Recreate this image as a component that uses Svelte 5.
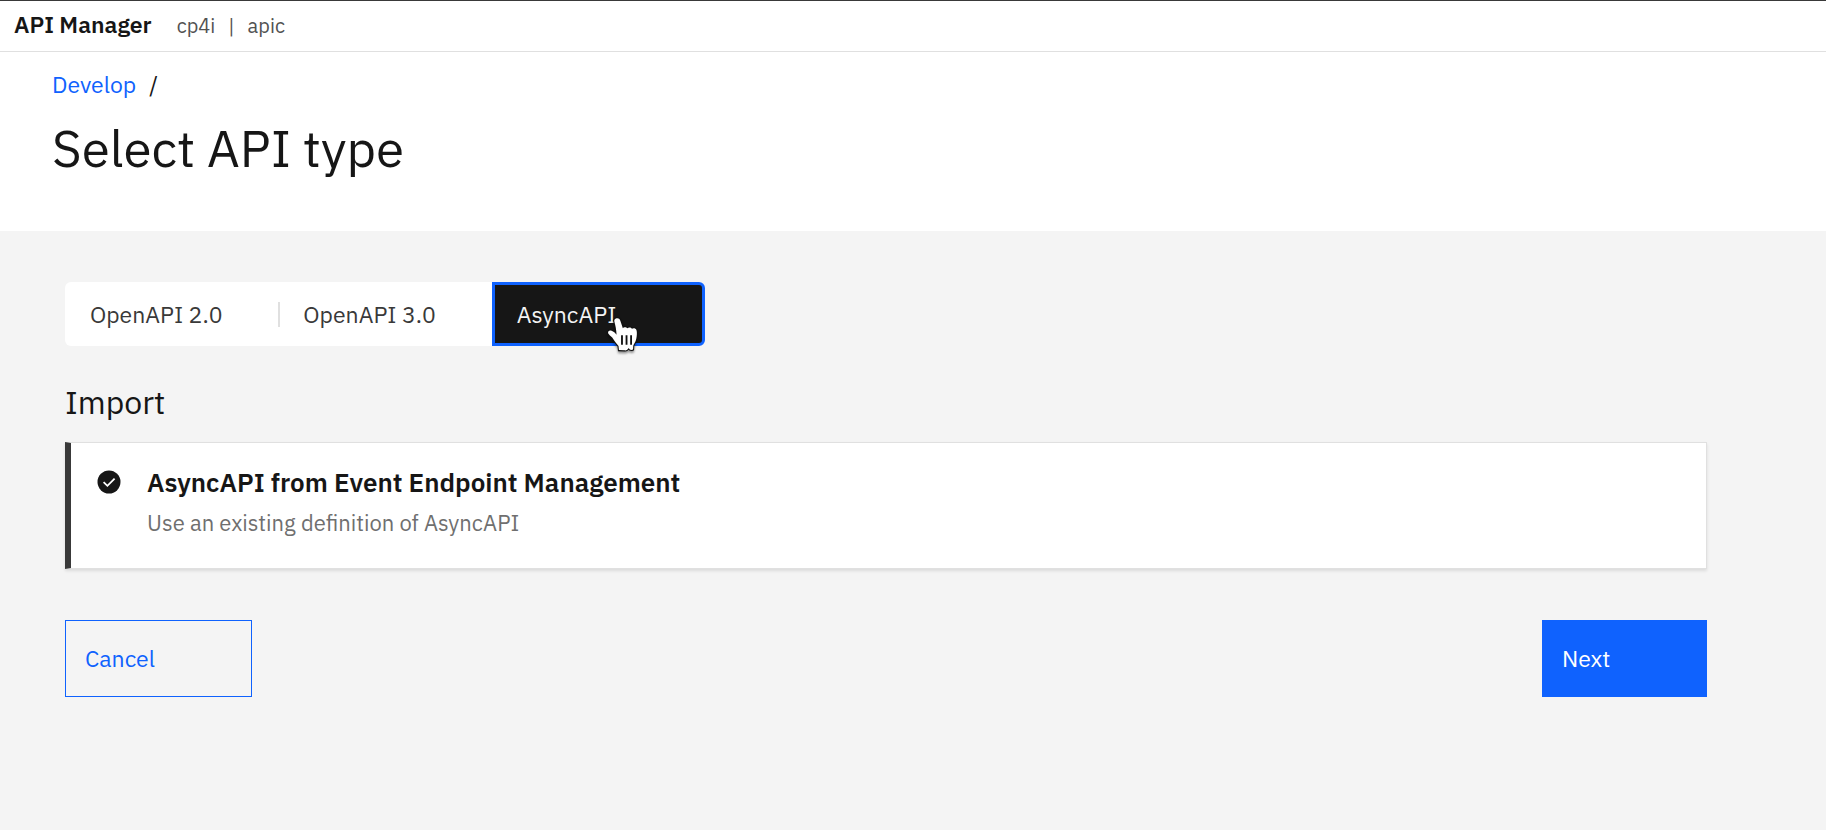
<script>
  const types = ['OpenAPI 2.0', 'OpenAPI 3.0', 'AsyncAPI'];
  let selected = $state('AsyncAPI');
</script>

<div class="page">
  <header class="topbar">
    <span class="product">API Manager</span>
    <span class="context">cp4i</span>
    <span class="context bar">|</span>
    <span class="context">apic</span>
  </header>

  <section class="heading">
    <nav class="crumbs" aria-label="Breadcrumb">
      <a href="#develop">Develop</a>
      <span>/</span>
    </nav>
    <h1>Select API type</h1>
  </section>

  <main>
    <div class="switcher">
      {#each types as type}
        <button
          type="button"
          class="tab"
          class:active={selected === type}
          aria-pressed={selected === type}
          onclick={() => (selected = type)}>{type}</button>
      {/each}
      <svg class="pointer" viewBox="0 0 32 36" aria-hidden="true">
        <path
          d="M9 3.2C10.8 2.4 12.4 3.3 13 5L15.4 12.2C16.2 10.9 18.6 10.8 19.6 12.3C20.8 11.1 23 11.4 23.8 12.8C25.2 11.8 27.4 12.4 28 14C28.6 16 28.4 19 27.8 22C27.2 25 25.6 26.6 25 28.4L24.8 31.8C22.8 32.8 21.6 31.8 20.8 30.4C19.8 32 18.6 33 16.8 32.6L11.8 32.4L11.4 28.6C9.4 26.4 7.4 23.4 5.6 20.8C4.4 19.4 2.4 18.2 1.8 16.8C1.4 14.8 3.2 13.8 5 14.6C6.8 15.2 8.4 16.8 9.6 18.2C9.4 13.6 8.6 9.6 7.6 6.2C7.2 4.8 7.8 3.6 9 3.2Z"
          fill="none" stroke="#111" stroke-width="2" />
        <path
          d="M9 3.2C10.8 2.4 12.4 3.3 13 5L15.4 12.2C16.2 10.9 18.6 10.8 19.6 12.3C20.8 11.1 23 11.4 23.8 12.8C25.2 11.8 27.4 12.4 28 14C28.6 16 28.4 19 27.8 22C27.2 25 25.6 26.6 25 28.4L24.8 31.8C22.8 32.8 21.6 31.8 20.8 30.4C19.8 32 18.6 33 16.8 32.6L11.8 32.4L11.4 28.6C9.4 26.4 7.4 23.4 5.6 20.8C4.4 19.4 2.4 18.2 1.8 16.8C1.4 14.8 3.2 13.8 5 14.6C6.8 15.2 8.4 16.8 9.6 18.2C9.4 13.6 8.6 9.6 7.6 6.2C7.2 4.8 7.8 3.6 9 3.2Z"
          fill="#fff" />
        <path d="M14.6 18.6V27.4M18.8 18.6V27.4M23 18.6V27.4" stroke="#111" stroke-width="1.7" />
      </svg>
    </div>

    <h2>Import</h2>

    <label class="card">
      <input type="radio" name="source" value="eem" checked />
      <svg class="check" viewBox="0 0 24 24" aria-hidden="true">
        <circle cx="12" cy="12" r="11.5" fill="#161616" />
        <path d="M6.6 12.2L10.4 15.8L17.6 8.6" fill="none" stroke="#fff" stroke-width="1.8" />
      </svg>
      <span class="copy">
        <strong>AsyncAPI from Event Endpoint Management</strong>
        <span class="hint">Use an existing definition of AsyncAPI</span>
      </span>
    </label>

    <div class="actions">
      <button type="button" class="btn cancel">Cancel</button>
      <button type="button" class="btn next">Next</button>
    </div>
  </main>
</div>

<style>
  :global(body) {
    margin: 0;
  }
  .page {
    box-sizing: border-box;
    min-height: 100vh;
    display: flex;
    flex-direction: column;
    border-top: 1px solid #393939;
    background: #fff;
    color: #161616;
    font-family: 'IBM Plex Sans', 'Noto Sans', sans-serif;
    font-size: 23px;
    line-height: 32px;
  }
  .topbar {
    display: flex;
    align-items: baseline;
    padding: 7px 14px 9px;
    border-bottom: 1px solid #e0e0e0;
  }
  .product {
    font-weight: 600;
    margin-right: 25px;
  }
  .context {
    font-size: 20px;
    color: #525252;
  }
  .bar {
    margin: 0 13px;
  }
  .heading {
    padding: 16px 52px 51px;
  }
  .crumbs {
    display: flex;
    gap: 13px;
  }
  .crumbs a {
    color: #0f62fe;
    text-decoration: none;
  }
  h1 {
    margin: 16px 0 0;
    font-size: 51px;
    line-height: 64px;
    font-weight: 400;
  }
  main {
    flex: 1;
    padding: 51px 119px 51px 65px;
    background: #f4f4f4;
  }
  .switcher {
    position: relative;
    display: grid;
    grid-template-columns: repeat(3, 1fr);
    width: 640px;
    max-width: 100%;
    height: 64px;
    border-radius: 6px;
    background: #fff;
  }
  button {
    font: inherit;
    text-align: left;
    cursor: pointer;
  }
  .tab {
    display: flex;
    align-items: center;
    padding: 0 25px;
    border: 0;
    background: none;
    color: #393939;
  }
  .tab:first-child::after {
    content: '';
    width: 2px;
    height: 25px;
    margin-left: auto;
    margin-right: -27px;
    background: #e0e0e0;
  }
  .tab.active {
    padding: 0 22px;
    border: 3px solid #0f62fe;
    border-radius: 0 6px 6px 0;
    background: #161616;
    color: #f4f4f4;
  }
  .pointer {
    position: absolute;
    left: 541px;
    top: 33px;
    width: 35px;
    height: 39px;
    filter: drop-shadow(0 2px 1px rgba(0, 0, 0, 0.4));
    pointer-events: none;
  }
  h2 {
    margin: 36px 0 20px;
    font-size: 32px;
    line-height: 40px;
    font-weight: 400;
  }
  .card {
    display: flex;
    align-items: flex-start;
    padding: 23px 26px 29px;
    border: 1px solid #e0e0e0;
    border-left: 6px solid #393939;
    background: #fff;
    box-shadow: 0 2px 3px rgba(0, 0, 0, 0.1);
    cursor: pointer;
  }
  .card input {
    position: absolute;
    opacity: 0;
    pointer-events: none;
  }
  .check {
    flex: none;
    width: 24px;
    height: 24px;
    margin: 4px 26px 0 0;
  }
  .copy {
    display: flex;
    flex-direction: column;
    gap: 9px;
  }
  strong {
    font-size: 26px;
    font-weight: 600;
  }
  .hint {
    font-size: 22px;
    color: #6f6f6f;
  }
  .actions {
    display: flex;
    justify-content: space-between;
    margin-top: 51px;
  }
  .btn {
    height: 77px;
    padding: 0 19px 2px;
    border: 1px solid #0f62fe;
  }
  .cancel {
    min-width: 187px;
    background: none;
    color: #0f62fe;
  }
  .next {
    min-width: 165px;
    background: #0f62fe;
    color: #fff;
  }
</style>
